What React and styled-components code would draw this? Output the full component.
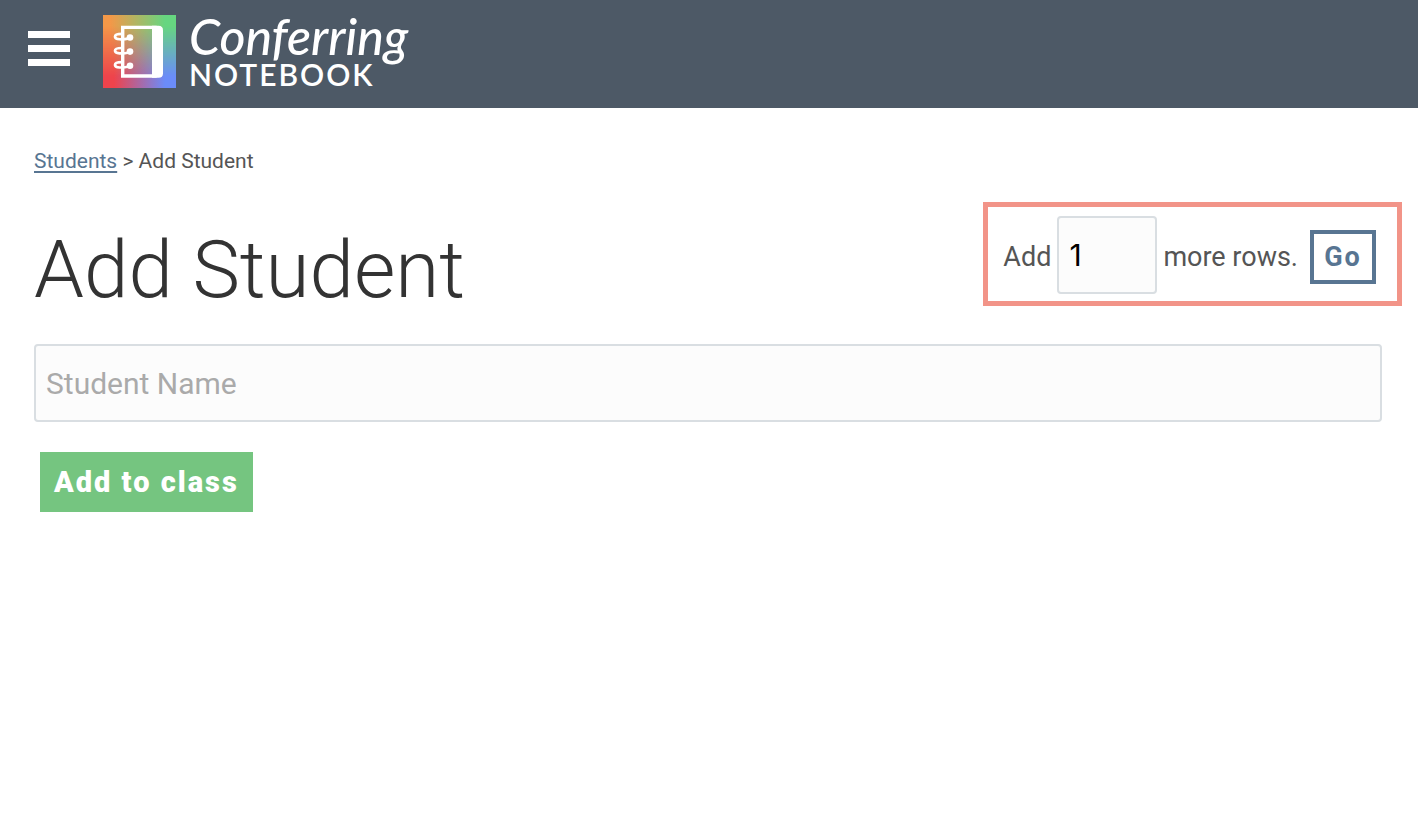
import { useState } from 'react';
import styled, { createGlobalStyle } from 'styled-components';

const GlobalStyle = createGlobalStyle`
    * {
        box-sizing: border-box;
    }
    body {
        margin: 0;
        background-color: #fff;
        color: #555;
        font-family: Roboto, sans-serif;
        font-size: 27px;
    }
`

const Header = styled.header`
    height: 108px;
    padding: 0 28px;
    display: flex;
    align-items: center;
    gap: 33px;
    background-color: #4d5966;
`

const MenuButton = styled.button`
    width: 42px;
    height: 50px;
    padding: 0;
    border: 0;
    background: none;
    display: flex;
    flex-direction: column;
    justify-content: center;
    gap: 7px;
    margin-top: -12px;
    cursor: pointer;
`

const MenuBar = styled.span`
    height: 7px;
    background-color: #fff;
`

const Brand = styled.a`
    display: flex;
    align-items: center;
    gap: 13px;
    color: #fff;
    text-decoration: none;
    margin-top: -5px;
`

const BrandText = styled.div`
    display: flex;
    flex-direction: column;
`

const Script = styled.span`
    font-family: Lato, sans-serif;
    font-style: italic;
    font-weight: 500;
    font-size: 50px;
    line-height: 44px;
`

const Caps = styled.span`
    font-family: Lato, sans-serif;
    font-weight: 600;
    font-size: 30px;
    line-height: 32px;
    letter-spacing: 2px;
`

const Main = styled.main`
    padding: 40px 36px 40px 34px;
`

const Breadcrumb = styled.nav`
    font-size: 21px;
    line-height: 26px;
    a {
        color: #587592;
        text-underline-offset: 3px;
        text-decoration-thickness: 2px;
    }
`

const TitleRow = styled.div`
    margin-top: 28px;
    margin-right: -20px;
    display: flex;
    flex-wrap: wrap;
    align-items: flex-start;
    justify-content: space-between;
`

const Title = styled.h1`
    margin: 20px 0 0;
    color: #333;
    font-weight: 300;
    font-size: 80px;
    line-height: 96px;
`

const RowsForm = styled.form`
    padding: 9px 21px 7px 15px;
    border: 5px solid #f29488;
    display: flex;
    align-items: baseline;
`

const TextInput = styled.input`
    height: 78px;
    width: ${props => props.$width};
    padding: 0 10px;
    border: 2px solid #d9dee2;
    border-radius: 4px;
    background-color: #fcfcfc;
    color: #000;
    font-family: ${props => props.$font || 'Roboto, sans-serif'};
    font-size: 30px;
    &::placeholder {
        color: #aaa;
        opacity: 1;
    }
    &::-webkit-inner-spin-button {
        appearance: none;
    }
`

const RowsInput = styled(TextInput)`
    margin: 0 6px;
`

const Button = styled.button`
    border: 0;
    border-radius: 0;
    font-family: Roboto, sans-serif;
    font-weight: 700;
    letter-spacing: 2px;
    cursor: pointer;
`

const GoButton = styled(Button)`
    width: 66px;
    height: 54px;
    margin-left: 12px;
    padding: 0;
    border: 4px solid #587592;
    background-color: #fff;
    color: #587592;
    font-size: 27px;
`

const AddButton = styled(Button)`
    height: 60px;
    margin: 30px 6px 0;
    padding: 0 14px;
    background-color: #75c580;
    color: #fff;
    font-size: 29px;
    font-weight: 900;
`

const StudentForm = styled.form`
    margin-top: 26px;
    display: flex;
    flex-direction: column;
    align-items: flex-start;
`

function NotebookIcon() {
    return (
        <svg width="73" height="73" viewBox="0 0 73 73" fill="none" stroke="#fff" aria-hidden="true">
            <defs>
                <linearGradient id="top">
                    <stop offset="0.1" stopColor="#f39848" />
                    <stop offset="0.85" stopColor="#66d680" />
                </linearGradient>
                <linearGradient id="bottom">
                    <stop offset="0.15" stopColor="#ee434c" />
                    <stop offset="0.85" stopColor="#6b8cf9" />
                </linearGradient>
                <linearGradient id="fade" x1="0" y1="0" x2="0" y2="1">
                    <stop offset="0.15" stopColor="#fff" />
                    <stop offset="0.85" stopColor="#fff" stopOpacity="0" />
                </linearGradient>
                <mask id="fadeMask">
                    <rect width="73" height="73" fill="url(#fade)" stroke="none" />
                </mask>
            </defs>
            <rect width="73" height="73" fill="url(#bottom)" stroke="none" />
            <rect width="73" height="73" fill="url(#top)" stroke="none" mask="url(#fadeMask)" />
            <path d="M19.7 12.4H52V61H19.7Z" strokeWidth="3.4" />
            <path d="M49 10.7H55.5Q60 10.7 60 15.2V58.2Q60 62.7 55.5 62.7H49Z" fill="#fff" stroke="none" />
            {[22.5, 36.6, 50.7].map(y => (
                <g key={y}>
                    <path d={`M19 ${y - 3.6}C15 ${y - 3.6} 12 ${y - 2.6} 12 ${y - 0.8}C12 ${y + 2.4} 19 ${y + 2.4} 27 ${y + 0.6}`} strokeWidth="2.7" />
                    <circle cx="27" cy={y} r="3.3" fill="#fff" stroke="none" />
                </g>
            ))}
        </svg>
    );
}

export default function App() {
    const [rows, setRows] = useState('1');
    const [students, setStudents] = useState(['']);

    const addRows = (e) => {
        e.preventDefault();
        const count = Math.max(0, Number(rows) || 0);
        setStudents(prev => [...prev, ...Array(count).fill('')]);
    };

    const rename = (id, name) => {
        setStudents(prev => prev.map((elem, i) => i === id ? name : elem));
    };

    return (
        <>
            <GlobalStyle />
            <Header>
                <MenuButton type="button" aria-label="Menu">
                    <MenuBar /><MenuBar /><MenuBar />
                </MenuButton>
                <Brand href="#">
                    <NotebookIcon />
                    <BrandText>
                        <Script>Conferring</Script>
                        <Caps>NOTEBOOK</Caps>
                    </BrandText>
                </Brand>
            </Header>
            <Main>
                <Breadcrumb>
                    <a href="#students">Students</a> &gt; Add Student
                </Breadcrumb>
                <TitleRow>
                    <Title>Add Student</Title>
                    <RowsForm onSubmit={addRows}>
                        <label htmlFor="rows">Add</label>
                        <RowsInput id="rows" type="number" min="1" $width="100px" $font="Inter, sans-serif" value={rows} onChange={e => setRows(e.target.value)} />
                        <span>more rows.</span>
                        <GoButton type="submit">Go</GoButton>
                    </RowsForm>
                </TitleRow>
                <StudentForm onSubmit={e => e.preventDefault()}>
                    {students.map((name, id) => (
                        <TextInput key={id} $width="100%" placeholder="Student Name" aria-label="Student Name" value={name} onChange={e => rename(id, e.target.value)} />
                    ))}
                    <AddButton type="submit">Add to class</AddButton>
                </StudentForm>
            </Main>
        </>
    );
}
